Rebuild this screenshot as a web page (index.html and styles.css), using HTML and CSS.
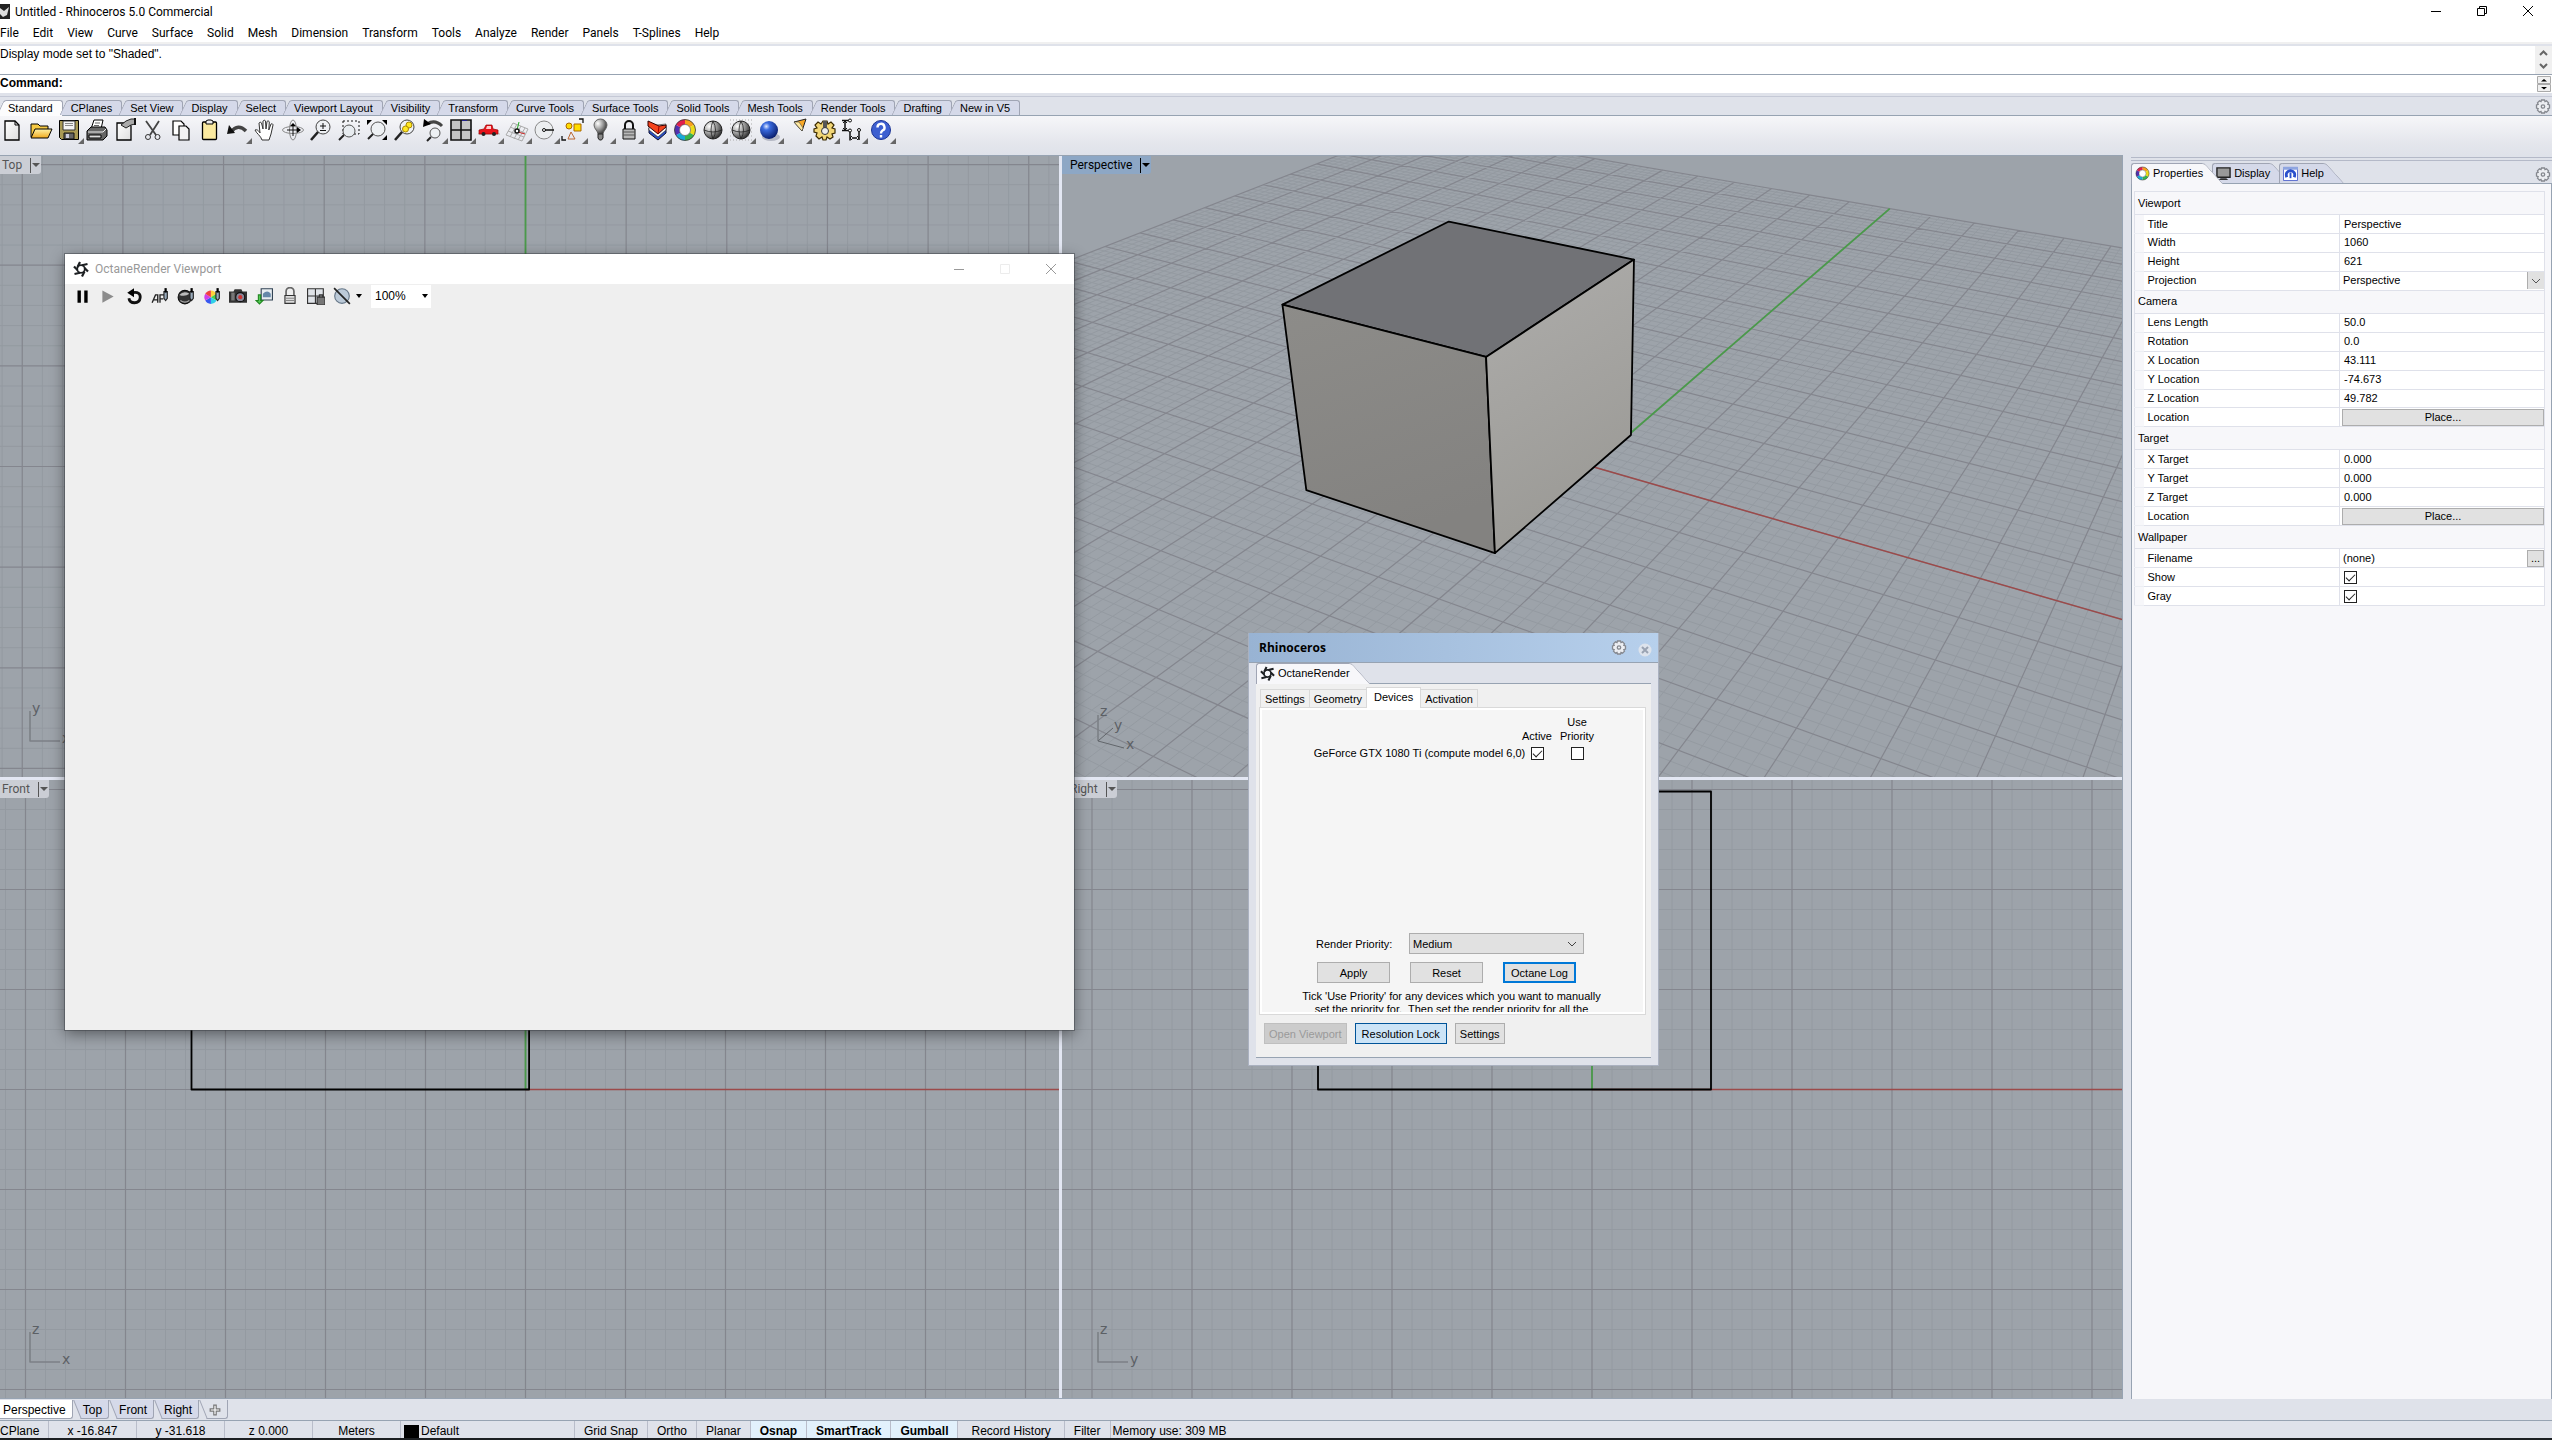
FILE: index.html
```html
<!DOCTYPE html>
<html lang="en">
<head>
<meta charset="utf-8">
<title>Untitled - Rhinoceros 5.0 Commercial</title>
<link rel="stylesheet" href="styles.css">
<script src="viewports.js" defer></script>
</head>
<body>
<svg class="defs" aria-hidden="true">
  <defs>
    <linearGradient id="paper" x1="0" y1="0" x2="1" y2="1"><stop offset="0" stop-color="#fff"/><stop offset="1" stop-color="#ddd"/></linearGradient>
    <radialGradient id="ball" cx=".3" cy=".3" r=".8"><stop offset="0" stop-color="#fff"/><stop offset=".5" stop-color="#999"/><stop offset="1" stop-color="#222"/></radialGradient>
    <radialGradient id="blueball" cx=".35" cy=".3" r=".8"><stop offset="0" stop-color="#dfe9ff"/><stop offset=".25" stop-color="#3a6be0"/><stop offset="1" stop-color="#03135c"/></radialGradient>
    <linearGradient id="gold" x1="0" y1="0" x2="0" y2="1"><stop offset="0" stop-color="#fff3a8"/><stop offset="1" stop-color="#f0a81c"/></linearGradient>
  </defs>
  <symbol id="gear" viewBox="0 0 16 16"><path d="M6.500 1h3l.5 1.600 1.500-.7 2 2-.7 1.500 1.700.6v3l-1.700.6.7 1.500-2 2-1.500-.7-.5 1.600h-3L6 12.400l-1.500.7-2-2 .7-1.500L1.500 9V6l1.700-.6-.7-1.500 2-2 1.500.7z" fill="#eceef2" stroke="#85888f" stroke-width="1.300"/><circle cx="8" cy="7.500" r="1.700" fill="none" stroke="#85888f" stroke-width="1.300"/></symbol>
  <symbol id="octane" viewBox="0 0 16 16"><circle cx="8" cy="8" r="3.800" fill="none" stroke="#1d2023" stroke-width="1.800"/><path d="M7 1L4.500 6M14.500 3L9 4.200M15 10.500L11.500 7M9 15.500l2.500-5M1.500 13l5.500-1.200M1 5.500L4.500 9" stroke="#1d2023" stroke-width="2.200" fill="none"/></symbol>
  <symbol id="wheel" viewBox="0 0 24 24"><g fill="none" stroke-width="5"><path d="M12 4a8 8 0 0 1 6.900 4" stroke="#f7a01c"/><path d="M18.900 8a8 8 0 0 1 0 8" stroke="#ecdc18"/><path d="M18.900 16a8 8 0 0 1-6.900 4" stroke="#39b54a"/><path d="M12 20a8 8 0 0 1-6.900-4" stroke="#19a9d8"/><path d="M5.100 16a8 8 0 0 1 0-8" stroke="#5030b0"/><path d="M5.100 8a8 8 0 0 1 6.900-4" stroke="#e0204c"/></g><circle cx="12" cy="12" r="10.500" fill="none" stroke="#333" stroke-width=".8"/><circle cx="12" cy="12" r="5.500" fill="#fff" stroke="#444" stroke-width=".6"/></symbol>
  <symbol id="sphere" viewBox="0 0 24 24"><circle cx="12" cy="12" r="9" fill="url(#ball)" stroke="#222"/><path d="M3 12q9 4 18 0M12 3q-4 9 0 18M12 3q5 9 0 18" fill="none" stroke="#222" stroke-width=".8"/></symbol>
  <symbol id="lens" viewBox="0 0 24 24"><circle cx="14" cy="9" r="7" fill="#eef1f4" fill-opacity=".7" stroke="#444"/><path d="M9 14l-7 8" stroke="#222" stroke-width="2.500"/></symbol>
</svg>

<header class="titlebar">
  <svg class="app-icon" viewBox="0 0 10 16"><path d="M0 0h10v15H0z" fill="#222"/><path d="M0 4l4 3 5-4-2 8-4 2-3-3z" fill="#ddd"/></svg>
  <h1>Untitled - Rhinoceros 5.0 Commercial</h1>
  <div class="window-controls">
    <button aria-label="Minimize"><svg viewBox="0 0 12 12"><path d="M1 6.500h10" stroke="#000" fill="none"/></svg></button>
    <button aria-label="Restore"><svg viewBox="0 0 12 12"><path d="M1.500 3.500h7v7h-7zM3.500 3V1.500h7v7H9" stroke="#000" fill="none"/></svg></button>
    <button aria-label="Close"><svg viewBox="0 0 12 12"><path d="M1 1l10 10M11 1L1 11" stroke="#000" fill="none"/></svg></button>
  </div>
</header>
<nav class="menubar">
  <button>File</button><button>Edit</button><button>View</button><button>Curve</button><button>Surface</button><button>Solid</button><button>Mesh</button><button>Dimension</button><button>Transform</button><button>Tools</button><button>Analyze</button><button>Render</button><button>Panels</button><button>T-Splines</button><button>Help</button>
</nav>
<section class="console">
  <div class="history"><p>Display mode set to "Shaded".</p>
    <svg class="scroll" viewBox="0 0 17 28"><path d="M5 9l3.500-3.500L12 9M5 18l3.500 3.500L12 18" stroke="#666" stroke-width="2" fill="none"/></svg>
  </div>
  <div class="prompt"><label for="cmd">Command:</label><input id="cmd" type="text">
    <svg class="spin" viewBox="0 0 14 18"><path d="M.5 1.500h13v7H.5zM.5 9.500h13v7H.5z" fill="#f0f0f0" stroke="#aaa"/><path d="M4 6.500L7 4l3 2.500zM4 12l3 2.500L10 12z"/></svg>
  </div>
</section>
<nav class="tooltabs">
  <button class="active">Standard</button><button>CPlanes</button><button>Set View</button><button>Display</button><button>Select</button><button>Viewport Layout</button><button>Visibility</button><button>Transform</button><button>Curve Tools</button><button>Surface Tools</button><button>Solid Tools</button><button>Mesh Tools</button><button>Render Tools</button><button>Drafting</button><button>New in V5</button>
  <svg class="gear"><use href="#gear"/></svg>
</nav>
<div class="toolbar">
  <button aria-label="New"><svg viewBox="0 0 24 24"><path d="M4 3h10l4 4v15H4z" fill="url(#paper)" stroke="#000" stroke-width="1.300"/><path d="M14 3v4h4" fill="none" stroke="#000"/></svg></button>
  <button aria-label="Open"><svg viewBox="0 0 24 24"><path d="M2 19V6h7l2 2h8v4" fill="#f5c842" stroke="#000"/><path d="M2 20L6 11h17l-4 9z" fill="url(#gold)" stroke="#000"/></svg></button>
  <button class="more" aria-label="Save"><svg viewBox="0 0 24 24"><path d="M2.500 2.500h19v19h-17l-2-2z" fill="#a99a55" stroke="#000"/><path d="M6 3h12v9H6z" fill="#f4f4f4" stroke="#333"/><path d="M8 5.500h8M8 7.500h8" stroke="#888"/><path d="M7 15h10v6H7z" fill="#666" stroke="#111"/><path d="M9 16h3v4H9z" fill="#ccd"/></svg></button>
  <button aria-label="Print"><svg viewBox="0 0 24 24"><path d="M9 2h9l-2 9H6z" fill="#fff" stroke="#000"/><path d="M10 5h5M9 7.500h5" stroke="#666"/><path d="M2 13l4-4h14l2 3v6l-4 4H2z" fill="#666" stroke="#000"/><path d="M3 14h15l3-3" fill="none" stroke="#eee"/><path d="M4 17h12v3H4z" fill="#ddd" stroke="#000"/></svg></button>
  <button aria-label="Properties"><svg viewBox="0 0 24 24"><path d="M4 5h11l3 3v14H4z" fill="url(#paper)" stroke="#000" stroke-width="1.300"/><path d="M8 7l5-4 5-2 4 0v5l-4 1-5 3z" fill="#aaa" stroke="#222"/><path d="M21 0h2v7h-2z" fill="#111"/></svg></button>
  <button aria-label="Cut"><svg viewBox="0 0 24 24"><path d="M5 3l10 14M18 3L9 17" stroke="#444" stroke-width="1.800"/><circle cx="7" cy="19" r="2.500" fill="none" stroke="#333"/><circle cx="16.500" cy="19" r="2.500" fill="none" stroke="#333"/></svg></button>
  <button aria-label="Copy"><svg viewBox="0 0 24 24"><path d="M4 3h8l3 3v11H4z" fill="#fff" stroke="#000" stroke-width="1.200"/><path d="M10 8h7l3 3v11H10z" fill="#f2f2f2" stroke="#000" stroke-width="1.200"/></svg></button>
  <button aria-label="Paste"><svg viewBox="0 0 24 24"><rect x="5.500" y="4" width="14" height="17.500" rx="1" fill="#fbeaa0" stroke="#000" stroke-width="1.300"/><path d="M9 6V3l2-1h3l2 1v3z" fill="#eee" stroke="#000"/></svg></button>
  <button class="more" aria-label="Undo"><svg viewBox="0 0 24 24"><path d="M6 14q7-9 15-1" fill="none" stroke="#444" stroke-width="3.500"/><path d="M2 16l2-9 6 8z" fill="#111"/></svg></button>
  <button aria-label="Pan"><svg viewBox="0 0 24 24"><path d="M9 22c-1-4-6-7-7-10 2-1 4 1 5 3L6 5c1-1 2-1 2.500 0L10 11V3c1-1 2-1 2.500 0l.5 8 1-7.500c1-1 2-.5 2.300.5L15.800 12l2.200-6c1-.7 2 0 2 1l-2 9-2 6z" fill="#fff" stroke="#333"/></svg></button>
  <button aria-label="Rotate view"><svg viewBox="0 0 24 24"><ellipse cx="12" cy="12" rx="10.500" ry="3.500" fill="none" stroke="#888"/><ellipse cx="12" cy="12" rx="3.500" ry="10" fill="none" stroke="#888"/><path d="M6 12h11M12 8v10" stroke="#111"/><path d="M16 9l4 3-4 3zM9 8h6l-3-3z"/></svg></button>
  <button aria-label="Zoom dynamic"><svg viewBox="0 0 24 24"><use href="#lens"/><path d="M11 8h6M14 5v6M11 12.500h6" stroke="#111"/></svg></button>
  <button aria-label="Zoom window"><svg viewBox="0 0 24 24"><path d="M6 3h16v13H6z" fill="none" stroke="#111" stroke-dasharray="2 2"/><circle cx="12" cy="13" r="6" fill="#e8ecf0" stroke="#555"/><path d="M7 17l-5 5" stroke="#222" stroke-width="2"/></svg></button>
  <button aria-label="Zoom extents"><svg viewBox="0 0 24 24"><circle cx="13" cy="11" r="7" fill="#eef1f4" stroke="#555"/><path d="M8 16l-5 5" stroke="#222" stroke-width="2"/><path d="M2 2h5L2 7zM22 2v5l-5-5zM22 22h-5l5-5z"/></svg></button>
  <button aria-label="Zoom selected"><svg viewBox="0 0 24 24"><use href="#lens"/><circle cx="16" cy="7" r="3" fill="#ffe822" stroke="#a80"/><circle cx="12.500" cy="11" r="3" fill="#ffe822" stroke="#a80"/></svg></button>
  <button class="more" aria-label="Undo view change"><svg viewBox="0 0 24 24"><path d="M6 6q8-5 15 2" fill="none" stroke="#444" stroke-width="3"/><path d="M2 9l1-8 7 5z"/><circle cx="14" cy="15" r="5" fill="#eef1f4" stroke="#555"/><path d="M10 19l-4 4" stroke="#222" stroke-width="2"/></svg></button>
  <button class="more" aria-label="4 viewports"><svg viewBox="0 0 24 24"><path d="M2 2h20v20H2zM12 2v20M2 12h20" fill="#c4c4c4" stroke="#111" stroke-width="1.600"/><path d="M13 2.500h5" stroke="#228"/></svg></button>
  <button class="more" aria-label="Set view"><svg viewBox="0 0 24 24"><path d="M1 16h22" stroke="#bbb"/><path d="M2 12l5-1 2-4h6l1 4 5 1v4H2z" fill="#e8141c" stroke="#900" stroke-width=".7"/><path d="M10 8h4v3H9z" fill="#fcc"/><circle cx="6.500" cy="16" r="2" fill="#222"/><circle cx="17" cy="16" r="2" fill="#222"/></svg></button>
  <button class="more" aria-label="Named CPlane"><svg viewBox="0 0 24 24"><path d="M8 5L1 17l16 6 6-12zM5 9l15 6M3 13l16 6M12 6L5 19M16 8l-7 13M20 10l-7 12" fill="none" stroke="#aaa"/><path d="M13 14l7 2" stroke="#c22"/><path d="M12 12l2-8" stroke="#2a2"/><circle cx="12" cy="13" r="2" fill="#fff" stroke="#111" stroke-width="1.500"/></svg></button>
  <button class="more" aria-label="Object snap"><svg viewBox="0 0 24 24"><circle cx="11" cy="12" r="9" fill="#eceef0" stroke="#888"/><circle cx="11" cy="12" r="1.500" fill="#fff" stroke="#111"/><path d="M12 12h9" stroke="#111" stroke-width="1.500"/></svg></button>
  <button class="more" aria-label="Select"><svg viewBox="0 0 24 24"><path d="M18 1h4v4M1 18v4h4" fill="none" stroke="#111" stroke-width="1.300"/><circle cx="8" cy="8" r="3" fill="#ffdc00" stroke="#a60"/><path d="M13 6h7v7h-7z" fill="#ffdc00" stroke="#a60"/><path d="M10 14l4 7H7z" fill="none" stroke="#b63"/></svg></button>
  <button class="more" aria-label="Show"><svg viewBox="0 0 24 24"><path d="M9 16c0-3-4-5-4-9a6.500 6 0 0 1 13 0c0 4-4 6-4 9z" fill="url(#ball)" stroke="#666"/><path d="M9 16h5v4l-1.500 2h-2L9 20z" fill="#888" stroke="#222"/></svg></button>
  <button class="more" aria-label="Lock"><svg viewBox="0 0 24 24"><path d="M8 11V7a4 4 0 0 1 8 0v4" fill="none" stroke="#111" stroke-width="2"/><path d="M6 11h12v10H6z" fill="#b8b8b8" stroke="#111"/><path d="M6 14h12M6 17h12" stroke="#555"/></svg></button>
  <button class="more" aria-label="Layer"><svg viewBox="0 0 24 24"><path d="M4 10v5l9 7 8-7V9z" fill="#2850c8" stroke="#113"/><path d="M4 8v4l9 7 8-7V6z" fill="#fff" stroke="#333" stroke-width=".7"/><path d="M3 3l11 5 7-1v2l-8 7L3 8z" fill="#f4421c" stroke="#300"/><path d="M14 8l-1 8" stroke="#900"/></svg></button>
  <button class="more" aria-label="Object properties"><svg><use href="#wheel"/></svg></button>
  <button class="more" aria-label="Shade"><svg><use href="#sphere"/></svg></button>
  <button class="more" aria-label="Shade viewport"><svg viewBox="0 0 24 24"><path d="M1 2h22M1 6h22M1 10h22M1 14h22M1 18h22M1 22h22" stroke="#aaa" stroke-dasharray="1 2"/><use href="#sphere" width="24" height="24"/></svg></button>
  <button class="more" aria-label="Render"><svg viewBox="0 0 24 24"><ellipse cx="14" cy="19" rx="9" ry="4" fill="#b5b8c4"/><circle cx="12" cy="12" r="9" fill="url(#blueball)"/></svg></button>
  <button class="more" aria-label="Spotlight"><svg viewBox="0 0 24 24"><path d="M9 4l12-3-4 12z" fill="#f9a825" stroke="#222"/><path d="M9 4l5 0 4 6-1 3z" fill="#ffe9a0" stroke="#444" stroke-width=".6"/></svg></button>
  <button class="more" aria-label="Options"><svg viewBox="0 0 24 24"><path d="M10 3h4l1 3 3-2 3 3-2 3 3 1v4l-3 1 1 3-3 2-3-2-1 3h-3l-1-3-3 2-3-3 1-3-3-1v-3l3-1-2-3 3-3 3 2z" fill="#f2d676" stroke="#3a2a00" stroke-width="1.200"/><path d="M10 3h4v10h-4z" fill="#555"/><circle cx="12" cy="13" r="3.500" fill="#eee" stroke="#333"/></svg></button>
  <button class="more" aria-label="Dimensions"><svg viewBox="0 0 24 24"><path d="M1 2.500h7M4 4v7M1 12.500h8v10M18 12v10M11 20h5" fill="none" stroke="#111" stroke-width="1.500"/><path d="M2 5l2-2 2 2M2 10l2 2 2-2M11 18l-2 2 2 2M16 18l2 2-2 2" fill="none" stroke="#111"/><circle cx="9" cy="2.500" r="1.500" fill="#fff" stroke="#111"/><circle cx="9" cy="12.500" r="1.500" fill="#fff" stroke="#111"/><circle cx="18" cy="12" r="1.500" fill="#fff" stroke="#111"/></svg></button>
  <button class="more" aria-label="Help"><svg viewBox="0 0 24 24"><circle cx="12" cy="12" r="9.500" fill="#3d5fd0" stroke="#1c3494"/><path d="M8.500 9.500a3.500 3.500 0 1 1 5 3q-1.500 1-1.500 3M12 17v2.500" fill="none" stroke="#fff" stroke-width="2.400"/></svg></button>
</div>

<main class="workspace">
  <div class="views">
    <section class="view" data-view="top" data-axes="y x"><svg class="scene"></svg><div class="view-label"><span>Top</span><i></i></div></section>
    <section class="view active" data-view="perspective"><svg class="scene"></svg><div class="view-label"><span>Perspective</span><i></i></div></section>
    <section class="view" data-view="front" data-axes="z x"><svg class="scene"></svg><div class="view-label"><span>Front</span><i></i></div></section>
    <section class="view" data-view="right" data-axes="z y"><svg class="scene"></svg><div class="view-label"><span>Right</span><i></i></div></section>
  </div>
  <aside class="panel">
    <nav class="panel-tabs">
      <button class="active"><svg><use href="#wheel"/></svg>Properties</button>
      <button><svg viewBox="0 0 16 16"><path d="M1 2h14v10H1z" fill="#999" stroke="#222" stroke-width="1.500"/><path d="M5 13h6l2 2H3z" fill="#333"/></svg>Display</button>
      <button><svg viewBox="0 0 16 16"><path d="M.5 1.500h15v14H.5z" fill="#fff" stroke="#56c"/><path d="M0 1h16v3H0z" fill="#8fa5e0"/><path d="M4 12q-2-6 4-7 6 1 4 7" fill="none" stroke="#2a50cc" stroke-width="3"/><path d="M8 7v6" stroke="#2a50cc" stroke-width="2"/></svg>Help</button>
      <svg class="gear"><use href="#gear"/></svg>
    </nav>
    <div class="panel-body">
      <table class="props">
        <colgroup><col class="gutter"><col class="name"><col></colgroup>
        <tbody>
          <tr class="group"><th colspan="3">Viewport</th></tr>
          <tr><td></td><th>Title</th><td>Perspective</td></tr>
          <tr><td></td><th>Width</th><td>1060</td></tr>
          <tr><td></td><th>Height</th><td>621</td></tr>
          <tr><td></td><th><label for="projection">Projection</label></th><td class="flush"><span class="picker"><select id="projection"><option>Perspective</option></select><svg viewBox="0 0 17 17"><path d="M1 0h16v17H1z" fill="#e1e1e1"/><path d="M.5 0v17" stroke="#adadad"/><path d="M5 7l4 4 4-4" fill="none" stroke="#555"/></svg></span></td></tr>
        </tbody>
        <tbody>
          <tr class="group"><th colspan="3">Camera</th></tr>
          <tr><td></td><th>Lens Length</th><td>50.0</td></tr>
          <tr><td></td><th>Rotation</th><td>0.0</td></tr>
          <tr><td></td><th>X Location</th><td>43.111</td></tr>
          <tr><td></td><th>Y Location</th><td>-74.673</td></tr>
          <tr><td></td><th>Z Location</th><td>49.782</td></tr>
          <tr><td></td><th>Location</th><td class="flush"><button class="place">Place...</button></td></tr>
        </tbody>
        <tbody>
          <tr class="group"><th colspan="3">Target</th></tr>
          <tr><td></td><th>X Target</th><td>0.000</td></tr>
          <tr><td></td><th>Y Target</th><td>0.000</td></tr>
          <tr><td></td><th>Z Target</th><td>0.000</td></tr>
          <tr><td></td><th>Location</th><td class="flush"><button class="place">Place...</button></td></tr>
        </tbody>
        <tbody>
          <tr class="group"><th colspan="3">Wallpaper</th></tr>
          <tr><td></td><th>Filename</th><td class="flush"><span class="picker">(none)<button class="browse">...</button></span></td></tr>
          <tr><td></td><th><label for="show">Show</label></th><td><input type="checkbox" id="show" checked></td></tr>
          <tr><td></td><th><label for="gray">Gray</label></th><td><input type="checkbox" id="gray" checked></td></tr>
        </tbody>
      </table>
    </div>
  </aside>
</main>

<nav class="viewtabs">
  <button class="active">Perspective</button><button>Top</button><button>Front</button><button>Right</button>
  <button class="add" aria-label="New viewport"><svg viewBox="0 0 10 10"><path d="M4 1h2v3h3v2H6v3H4V6H1V4h3z" fill="#fff" stroke="#777"/></svg></button>
</nav>
<footer class="status">
  <button class="cplane">CPlane</button><span class="coord">x -16.847</span><span class="coord">y -31.618</span><span class="coord">z 0.000</span><button class="coord">Meters</button><button class="layer"><i></i>Default</button>
  <button>Grid Snap</button><button>Ortho</button><button>Planar</button><button class="on">Osnap</button><button class="on">SmartTrack</button><button class="on">Gumball</button><button class="history-cell">Record History</button><button>Filter</button><span class="memory">Memory use: 309 MB</span>
</footer>

<section class="render-window">
  <header><svg><use href="#octane"/></svg><h2>OctaneRender Viewport</h2>
    <div class="window-controls">
      <button aria-label="Minimize"><svg viewBox="0 0 12 12"><path d="M1 6.500h10" stroke="#999" fill="none"/></svg></button>
      <button aria-label="Maximize" disabled><svg viewBox="0 0 12 12"><path d="M1.500 1.500h9v9h-9z" stroke="#ececec" fill="none"/></svg></button>
      <button aria-label="Close"><svg viewBox="0 0 12 12"><path d="M1 1l10 10M11 1L1 11" stroke="#999" fill="none"/></svg></button>
    </div>
  </header>
  <div class="render-tools">
    <button aria-label="Pause"><svg viewBox="0 0 16 16"><path d="M4 3h3v11H4zM10 3h3v11h-3z"/></svg></button>
    <button aria-label="Play"><svg viewBox="0 0 16 16"><path d="M3 3l10 5.500L3 14z" fill="#8c8c8c"/></svg></button>
    <button aria-label="Restart"><svg viewBox="0 0 16 16"><path d="M7 5q7-1 6.500 4.500Q13 14 8.500 14 4 14 3.500 10" fill="none" stroke="#111" stroke-width="2.500"/><path d="M2 5l6-4v8z"/></svg></button>
    <button aria-label="Autofocus"><svg viewBox="0 0 16 16"><path d="M1 14l3-7h2v7M2 11.500h4M8 14V7h4M8 10.500h3" fill="none" stroke="#222" stroke-width="1.200"/><path d="M11.500 4h3v6l-1.500 2-1.500-2z" fill="#9ab" stroke="#222"/><path d="M12 1h2v4h-2z"/></svg></button>
    <button aria-label="Pick material"><svg viewBox="0 0 16 16"><circle cx="7" cy="9" r="6" fill="#333" stroke="#111"/><path d="M2 7q4-4 9-1-4 3-9 1z" fill="#bbb"/><path d="M3 12q4 3 8 0" stroke="#aaa" fill="none"/><path d="M11.500 4h3v6l-1.500 2-1.500-2z" fill="#9ab" stroke="#222"/><path d="M12 1h2v4h-2z"/></svg></button>
    <button aria-label="White balance"><svg viewBox="0 0 16 16"><path d="M7 9V3a6 6 0 0 1 5 3z" fill="#ffd23c"/><path d="M7 9l5-3a6 6 0 0 1 0 6z" fill="#4cd048"/><path d="M7 9l5 3a6 6 0 0 1-5 3z" fill="#30d0e8"/><path d="M7 9v6a6 6 0 0 1-5-3z" fill="#3858f0"/><path d="M7 9l-5 3a6 6 0 0 1 0-6z" fill="#d040e8"/><path d="M7 9L2 6a6 6 0 0 1 5-3z" fill="#f04040"/><path d="M11.500 4h3v6l-1.500 2-1.500-2z" fill="#9ab" stroke="#222"/><path d="M12 1h2v4h-2z"/></svg></button>
    <button aria-label="Camera"><svg viewBox="0 0 16 16"><path d="M0 4h4l1-2h6l1 2h4v10H0z" fill="#333"/><path d="M2 5h3v7H2z" fill="#777"/><circle cx="10" cy="9" r="4" fill="#889" stroke="#111"/><circle cx="10" cy="9" r="1.800" fill="#c33"/></svg></button>
    <button aria-label="Save image"><svg viewBox="0 0 16 16"><path d="M5.500 1.500h10v10h-10z" fill="#e9eef2" stroke="#345"/><path d="M7 6q4-4 7 0v3H7z" fill="#68a"/><path d="M3 7v5H1l3 3 3-3H5V7z" fill="#5c5" stroke="#282"/></svg></button>
    <button aria-label="Lock resolution"><svg viewBox="0 0 16 16"><path d="M4.500 8V4a3.500 3.500 0 0 1 7 0v4" fill="none" stroke="#666" stroke-width="1.500"/><path d="M3.500 7.500h9v7h-9z" fill="#ddd" stroke="#333"/><path d="M4 10h8M4 12h8" stroke="#888"/></svg></button>
    <button aria-label="Lock region"><svg viewBox="0 0 16 16"><path d="M.5 1.500h14v13H.5zM7.500 1.500v13M.5 8h14" fill="#dfe3e8" stroke="#333"/><path d="M9 9h7v7H9z" fill="#777" stroke="#333"/><path d="M11 9V7h3v2" fill="none" stroke="#333"/></svg></button>
    <button aria-label="Clay mode"><svg viewBox="0 0 16 16"><circle cx="8" cy="8" r="6.500" fill="#bccad8" stroke="#678"/><path d="M1 1l14 14" stroke="#222" stroke-width="1.500"/></svg></button>
    <svg class="drop" viewBox="0 0 8 8"><path d="M1 2h6L4 6z"/></svg>
    <span class="zoom"><select aria-label="Zoom"><option>100%</option></select><svg class="drop" viewBox="0 0 8 8"><path d="M1 2h6L4 6z"/></svg></span>
  </div>
</section>

<section class="dialog">
  <header><h2>Rhinoceros</h2><svg class="gear"><use href="#gear"/></svg><button aria-label="Close"><svg viewBox="0 0 14 14"><circle cx="7" cy="7" r="6.500" fill="#dde3ec"/><path d="M4 4l6 6M10 4l-6 6" stroke="#9aa3b2" stroke-width="2"/></svg></button></header>
  <nav class="panel-tabs"><button class="active"><svg><use href="#octane"/></svg>OctaneRender</button></nav>
  <div class="dialog-body">
    <nav class="subtabs"><button>Settings</button><button>Geometry</button><button class="active">Devices</button><button>Activation</button></nav>
    <div class="page">
      <div class="devices">
        <span></span><span>Active</span><span>Use<br>Priority</span>
        <label for="active">GeForce GTX 1080 Ti (compute model 6,0)</label><input type="checkbox" id="active" checked><input type="checkbox" aria-label="Use priority">
      </div>
      <div class="priority"><label for="prio">Render Priority:</label><span class="combo"><select id="prio"><option>Medium</option></select><svg viewBox="0 0 10 6"><path d="M1 1l4 4 4-4" fill="none" stroke="#444"/></svg></span></div>
      <div class="actions"><button>Apply</button><button>Reset</button><button class="focus">Octane Log</button></div>
      <p>Tick 'Use Priority' for any devices which you want to manually<br>set the priority for.&nbsp; Then set the render priority for all the</p>
    </div>
    <div class="bottom"><button disabled>Open Viewport</button><button class="pressed">Resolution Lock</button><button>Settings</button></div>
  </div>
</section>
</body>
</html>
```
FILE: styles.css
```css
* { box-sizing: border-box; }
body, h1, h2, p { margin: 0; }
body {
  display: flex; flex-direction: column; min-height: 100vh; overflow: hidden; position: relative;
  background: #dfe2ea; color: #000; font: 12px/14px "Liberation Sans", Arial, sans-serif;
}
button, input, select { font: inherit; color: inherit; border: 0; padding: 0; margin: 0; background: none; border-radius: 0; white-space: nowrap; }
svg { display: block; flex: none; }
.defs { position: absolute; width: 0; height: 0; }
select { appearance: none; outline: 0; }
input[type="checkbox"] { appearance: none; display: block; width: 13px; height: 13px; border: 1px solid #222; background: #fff; }
input[type="checkbox"]:checked::after { content: ""; display: block; width: 8px; height: 4px; margin: 2px 1px; border: solid #222; border-width: 0 0 1px 1px; transform: rotate(-45deg); }
.gear { width: 16px; height: 16px; }

.titlebar { display: flex; align-items: center; height: 24px; background: #fff; }
.app-icon { width: 10px; height: 16px; }
.titlebar h1 { margin-left: 5px; font: 12px/16px Roboto, sans-serif; flex: 1; }
.window-controls { display: flex; }
.window-controls button { width: 46px; height: 22px; display: flex; justify-content: center; align-items: center; }
.window-controls svg { width: 12px; height: 12px; }
.titlebar .window-controls { margin-right: 1px; align-self: flex-start; }
.menubar { display: flex; gap: 14px; height: 18px; margin-bottom: 4px; background: #fff; font: 12px/16px Roboto, sans-serif; box-shadow: 0 2px #f0f0f0; }
.console { background: #fff; }
.history { display: flex; justify-content: space-between; height: 29px; border-bottom: 1px solid #97a3b2; }
.history p { line-height: 16px; }
.scroll { width: 17px; height: 28px; background: #f0f0f0; }
.prompt { display: flex; height: 18px; font-weight: bold; line-height: 16px; }
.prompt input { flex: 1; outline: 0; }
.spin { width: 14px; height: 18px; margin-right: 1px; }

.tooltabs { display: flex; align-items: flex-end; height: 23px; padding-top: 4px; border-bottom: 1px solid #97a3b2; font-size: 11px; background: linear-gradient(#dfe2ea 3px, #c5c9d6 3px, #c5c9d6 4px, #dfe2ea 4px); }
.tooltabs button { position: relative; z-index: 0; height: 15px; padding: 1px 10px 0 8px; line-height: 15px; }
.tooltabs button::before, .tooltabs button::after { content: ""; position: absolute; z-index: -1; top: 0; bottom: 0; background: #d5d9e9; border: 0 solid #a0a5b4; border-top-width: 1px; }
.tooltabs button::before { left: 0; right: 10px; border-left-width: 1px; border-top-left-radius: 3px; transform: skewX(-25deg); }
.tooltabs button::after { left: 10px; right: 0; border-right-width: 1px; border-top-right-radius: 3px; }
.tooltabs .active::before, .tooltabs .active::after { background: #fcfcfd; bottom: -1px; }
.tooltabs .gear { margin: 0 1px 0 auto; }
.toolbar { display: flex; height: 39px; background: linear-gradient(#f6f6f9, #e4e6ec 70%, #dfe2ea); }
.toolbar button { position: relative; width: 28px; height: 29px; padding: 2px 2px 0 1px; display: flex; }
.toolbar button svg { width: 24px; height: 24px; }
.toolbar .more::after { content: ""; position: absolute; right: 0; bottom: 1px; border: 3px solid transparent; border-right-color: #666; border-bottom-color: #666; }

.workspace { display: flex; flex: 1; }
.views { flex: 1; display: grid; grid-template: 621fr 618fr / 1059fr 1060fr; gap: 3px; background: #e3e7f3; border: solid #97a3b2; border-width: 1px 1px 1px 0; }
.view { position: relative; overflow: hidden; background: #9da3aa; }
.scene { position: absolute; inset: 0; width: 100%; height: 100%; }
.scene text { font: 14px "DejaVu Sans", sans-serif; fill: #5c6065; }
.view-label { position: relative; display: inline-flex; align-items: center; height: 18px; padding-left: 2px; background: #cbced5; color: #555; border-bottom-right-radius: 3px; font: 12px/18px Roboto, sans-serif; vertical-align: top; }
.view:nth-child(even) .view-label { padding-left: 8px; }
.view-label i { height: 15px; margin-left: 8px; width: 11px; border-left: 1px solid currentColor; display: flex; align-items: center; }
.view-label i::after { content: ""; border: 4px solid transparent; border-top-color: currentColor; border-bottom: 0; margin-left: 1px; }
.view.active .view-label { background: #8da7c5; color: #000; }

.panel { width: 429px; padding: 2px 0 0 8px; display: flex; flex-direction: column; }
.panel-tabs { display: flex; align-items: flex-end; height: 27px; border-bottom: 1px solid #97a3b2; font-size: 11px; background: linear-gradient(#b4b9c8 1px, transparent 1px, transparent 3px, #b4b9c8 3px, #b4b9c8 4px, transparent 4px); }
.panel-tabs button { position: relative; z-index: 0; display: flex; align-items: center; gap: 3px; height: 20px; padding: 0 9px 0 4px; }
.panel-tabs button svg { width: 15px; height: 15px; }
.panel-tabs button::before, .panel-tabs button::after { content: ""; position: absolute; z-index: -1; top: 0; bottom: 0; background: #d5d9e9; border: 0 solid #a0a5b4; border-top-width: 1px; }
.panel-tabs button::before { left: 0; right: 12px; border-left-width: 1px; border-top-left-radius: 3px; }
.panel-tabs button::after { left: 12px; right: -2px; border-right-width: 1px; transform: skewX(42deg); border-top-right-radius: 3px; }
.panel-tabs .active { z-index: 1; }
.panel-tabs .active::before, .panel-tabs .active::after { background: #f7f7fa; bottom: -1px; }
.panel-tabs .gear { margin: 0 1px 0 auto; }
.panel-body { flex: 1; background: #f7f7fa; border: solid #97a3b2; border-width: 0 1px; padding: 7px 6px 0 2px; }
.props { width: 100%; height: 415px; table-layout: fixed; border-collapse: collapse; font-size: 11px; line-height: 13px; border: 1px solid #dfe1ea; }
.props .gutter { width: 9px; }
.props .name { width: 196px; }
.props th, .props td { padding: 0 0 0 4px; text-align: left; font-weight: normal; background: #fff; border: solid #dfe1ea; border-width: 1px 0; }
.props td:first-child, .props .group th { background: #f7f7fa; border-right-width: 0; }
.props td:first-child { border-color: #eceef3; }
.props td:last-child { border-left-width: 1px; }
.props .group { height: 22px; }
.props tr { height: 18px; }
.props .group th { padding-left: 3px; }
.props td.flush { padding: 0 0 0 2px; }
.picker { display: flex; justify-content: space-between; align-items: center; padding-left: 1px; }
.picker select { flex: 1; }
.picker svg { width: 17px; height: 17px; }
.place, .browse { height: 17px; line-height: 15px; background: #e1e1e1; border: 1px solid #adadad; }
.place { display: block; width: 100%; }
.browse { width: 17px; }

.viewtabs { display: flex; height: 22px; padding: 1px 0; border-bottom: 1px solid #97a3b2; font-size: 12px; }
.viewtabs button { position: relative; z-index: 0; height: 19px; padding: 0 7px 0 10px; }
.viewtabs button::before, .viewtabs button::after { content: ""; position: absolute; z-index: -1; top: 0; bottom: 0; background: #d5d9e9; border: 0 solid #a0a5b4; border-bottom-width: 1px; }
.viewtabs button::before { left: 4px; right: 10px; border-left-width: 1px; transform: skewX(22deg); }
.viewtabs button::after { left: 14px; right: 0; border-right-width: 1px; border-bottom-right-radius: 3px; }
.viewtabs .active { padding-left: 3px; }
.viewtabs .active::before, .viewtabs .active::after { background: #fff; left: 0; }
.viewtabs .active::before { transform: none; border-left-width: 0; }
.viewtabs .add::before, .viewtabs .add::after { background: #dfe2ea; }
.viewtabs .add svg { width: 12px; height: 12px; }
.status { display: flex; height: 19px; border-bottom: 2px solid #1c1f22; font-size: 12px; line-height: 19px; }
.status > * { padding: 1px 9px 0; border-right: 1px solid #b9bdca; text-align: center; }
.status .cplane { padding: 1px 8px 0 0; width: 49px; text-align: left; }
.status .coord { width: 88px; padding: 1px 0 0; }
.status .layer { width: 174px; padding: 1px 0 0 3px; display: flex; gap: 2px; }
.status .layer i { width: 15px; height: 13px; margin-top: 3px; background: #000; }
.status .on { font-weight: bold; background: #e2f1fc; }
.status .history-cell { padding: 1px 13px 0; }
.status .memory { padding: 1px 2px 0; border: 0; }

.render-window { position: absolute; left: 65px; top: 254px; width: 1009px; height: 776px; background: #efefef; box-shadow: 0 0 0 1px rgba(60, 64, 70, .5), 0 4px 14px rgba(0, 0, 0, .45); }
.render-window header { display: flex; align-items: center; height: 30px; padding-left: 8px; background: #fff; }
.render-window header > svg { width: 16px; height: 16px; }
.render-window h2 { flex: 1; margin-left: 6px; color: #999; font: 12px/16px Roboto, sans-serif; }
.render-tools { display: flex; align-items: center; height: 24px; padding-left: 8px; gap: 8px; }
.render-tools button { width: 18px; height: 18px; padding: 0; }
.render-tools button svg { width: 18px; height: 18px; }
.drop { width: 8px; height: 8px; }
.render-tools > .drop { margin: 0 -2px 0 -4px; }
.zoom { display: flex; align-items: center; width: 60px; height: 23px; background: #fff; padding: 0 2px 0 4px; margin-left: 2px; }
.zoom select { flex: 1; }

.dialog { position: absolute; left: 1248px; top: 633px; width: 411px; height: 433px; display: flex; flex-direction: column; padding: 0 7px 7px 7px; background: #dfe2ea; border: 1px solid #aab1c0; border-top: 0; font-size: 11px; }
.dialog header { display: flex; align-items: center; height: 30px; margin: 0 -7px; padding: 0 6px 0 10px; background: linear-gradient(90deg, #98b3d3, #b7d0ec); border-bottom: 1px solid #97a3b2; }
.dialog h2 { flex: 1; font: bold 12px/16px "Open Sans", "Noto Sans", sans-serif; }
.dialog header button { margin: 5px 0 0 11px; }
.dialog header button svg { width: 14px; height: 14px; }
.dialog .panel-tabs { height: 21px; background: none; }
.dialog-body { flex: 1; background: #f0f0f0; border-bottom: 1px solid #97a3b2; padding: 3px 5px 0 3px; }
.subtabs { display: flex; align-items: flex-end; height: 20px; padding-left: 1px; }
.subtabs button { height: 18px; padding: 0 4px; border: 1px solid #d9d9d9; border-bottom: 0; margin-right: -1px; }
.subtabs .active { position: relative; height: 21px; margin-bottom: -1px; padding: 0 7px 2px; background: #fff; }
.page { height: 308px; display: flex; flex-direction: column; overflow: hidden; padding-top: 7px; background: #f5f5f5; border: 1px solid #d9d9d9; box-shadow: inset 0 0 0 2px #fff; }
.devices { display: grid; grid-template-columns: 211px 24px 56px; justify-content: start; align-items: end; justify-items: center; text-align: center; padding-left: 54px; row-gap: 3px; flex: 1; align-content: start; white-space: nowrap; }
.priority { display: flex; align-items: center; height: 21px; padding-left: 56px; }
.priority label { width: 93px; }
.combo { display: flex; align-items: center; width: 175px; height: 21px; padding: 0 6px 0 3px; background: #e1e1e1; border: 1px solid #adadad; }
.combo select { flex: 1; }
.combo svg { width: 10px; height: 6px; }
.actions { display: flex; gap: 20px; padding: 8px 0 7px 57px; }
.actions button { width: 73px; height: 21px; }
.actions button, .bottom button { background: #e1e1e1; border: 1px solid #adadad; }
.actions .focus { border: 2px solid #0078d7; }
.page p { height: 22px; overflow: hidden; margin: 0 2px 2px 0; line-height: 13px; text-align: center; white-space: nowrap; }
.bottom { display: flex; gap: 8px; padding: 8px 5px; }
.bottom button { height: 21px; padding: 0 4px; }
.bottom button:disabled { background: #ccc; border-color: #bfbfbf; color: #9a9a9a; }
.bottom .pressed { background: #cce4f7; border-color: #005499; padding: 0 6px; }
```
FILE: viewports.js
```js
// Draws the construction-plane grid, the world axes and the box in each viewport.
const NS = "http://www.w3.org/2000/svg";
const EXTENT = 70;
const BOX = { x: [-16.7, 0.18], y: [-13.7, 5.95], z: [0, 14.9] };
const CAMERA = [43.111, -74.673, 49.782];
const LENS = 50;
const COLORS = { minor: "#949aa1", major: "#84868e", x: "#9c4a4a", y: "#4a9a4a" };

function add(svg, tag, attrs, text) {
  const el = document.createElementNS(NS, tag);
  for (const key in attrs) el.setAttribute(key, attrs[key]);
  if (text) el.textContent = text;
  svg.appendChild(el);
  return el;
}

function path(svg, d, stroke, width = 1, fill = "none") {
  add(svg, "path", { d, stroke, "stroke-width": width, fill, "stroke-linejoin": "round" });
}

const segment = (a, b) => `M${a[0]} ${a[1]}L${b[0]} ${b[1]}`;

function grid(svg, project) {
  let minor = "", major = "";
  for (let i = -EXTENT; i <= EXTENT; i++) {
    const d = segment(project(i, -EXTENT), project(i, EXTENT)) + segment(project(-EXTENT, i), project(EXTENT, i));
    if (i % 5) minor += d; else major += d;
  }
  path(svg, minor, COLORS.minor);
  path(svg, major, COLORS.major, 1.2);
  path(svg, segment(project(0, 0), project(EXTENT, 0)), COLORS.x, 1.5);
  path(svg, segment(project(0, 0), project(0, EXTENT)), COLORS.y, 1.8);
}

function drawPlan(view, svg, w, h) {
  const name = view.dataset.view;
  const scale = name === "top" ? 20.13 : 20;
  const cx = name === "right" ? w / 2 : (w - 8) / 2;
  const cy = Math.floor(h / 2) + 0.5;
  const project = (u, v) => [cx + u * scale, cy - v * scale];
  grid(svg, project);
  const [u, v] = { top: ["x", "y"], front: ["x", "z"], right: ["y", "z"] }[name].map(k => BOX[k]);
  const c = [project(u[0], v[0]), project(u[1], v[0]), project(u[1], v[1]), project(u[0], v[1])];
  path(svg, "M" + c.map(p => p.join(" ")).join("L") + "Z", "#000", 1.8);

  const x = name === "right" ? 36 : 30, y = h - 36;
  const [up, across] = view.dataset.axes.split(" ");
  path(svg, `M${x} ${y - 30}V${y}H${x + 30}`, "#7c8086", 1.6);
  add(svg, "text", { x: x + 2, y: y - 28 }, up);
  add(svg, "text", { x: x + 32, y: y + 2 }, across);
}

function drawPerspective(svg, w, h) {
  const len = Math.hypot(...CAMERA);
  const f = CAMERA.map(c => -c / len);
  const flat = Math.hypot(f[0], f[1]);
  const r = [f[1] / flat, -f[0] / flat, 0];
  const up = [r[1] * f[2], -r[0] * f[2], r[0] * f[1] - r[1] * f[0]];
  const focal = Math.min(w, h) / 2 * LENS / 12;
  const dot = (a, b) => a[0] * b[0] + a[1] * b[1] + a[2] * b[2];
  const project = (x, y, z = 0) => {
    const p = [x, y, z], depth = len + dot(p, f);
    return [w / 2 + focal * dot(p, r) / depth, h / 2 - focal * dot(p, up) / depth];
  };
  grid(svg, project);

  const defs = add(svg, "defs", {});
  const shade = (id, from, to) => {
    const g = add(defs, "linearGradient", { id, x1: 0, y1: 0, x2: 0.3, y2: 1 });
    add(g, "stop", { offset: 0, "stop-color": from });
    add(g, "stop", { offset: 1, "stop-color": to });
  };
  shade("face-left", "#8d8c89", "#838280");
  shade("face-right", "#aeadab", "#9b9a96");
  const { x, y, z } = BOX;
  const face = (pts, fill) => path(svg, "M" + pts.map(p => project(...p).join(" ")).join("L") + "Z", "#000", 1.8, fill);
  face([[x[0], y[0], z[1]], [x[1], y[0], z[1]], [x[1], y[1], z[1]], [x[0], y[1], z[1]]], "#717276");
  face([[x[0], y[0], z[0]], [x[1], y[0], z[0]], [x[1], y[0], z[1]], [x[0], y[0], z[1]]], "url(#face-left)");
  face([[x[1], y[0], z[0]], [x[1], y[1], z[0]], [x[1], y[1], z[1]], [x[1], y[0], z[1]]], "url(#face-right)");

  const ox = 36, oy = h - 36;
  path(svg, `M${ox} ${oy - 26}V${oy}`, "#7c8086", 1.6);
  path(svg, `M${ox + 15} ${oy - 13}L${ox} ${oy}L${ox + 26} ${oy + 7}`, "#62666b", 1);
  add(svg, "text", { x: ox + 2, y: oy - 25 }, "z");
  add(svg, "text", { x: ox + 16, y: oy - 11 }, "y");
  add(svg, "text", { x: ox + 28, y: oy + 8 }, "x");
}

function draw() {
  for (const view of document.querySelectorAll(".view")) {
    const svg = view.querySelector(".scene");
    svg.replaceChildren();
    const w = view.clientWidth, h = view.clientHeight;
    if (view.dataset.view === "perspective") drawPerspective(svg, w, h);
    else drawPlan(view, svg, w, h);
  }
}

draw();
addEventListener("resize", draw);
```
